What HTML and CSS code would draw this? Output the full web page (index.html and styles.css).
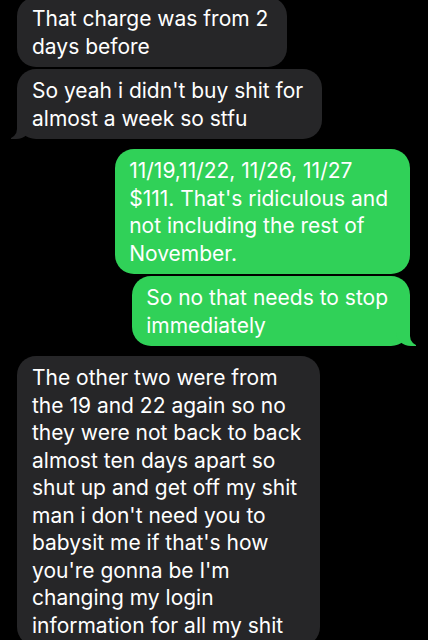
FILE: index.html
```html
<!DOCTYPE html>
<html lang="en">
<head>
<meta charset="utf-8">
<title>Messages</title>
<link rel="stylesheet" href="styles.css">
</head>
<body>
<main class="thread">
  <div class="msg them">That charge was from 2<br>days before</div>
  <div class="msg them tail">So yeah i didn't buy shit for<br>almost a week so stfu</div>
  <div class="msg me first-group">11/19,11/22, 11/26, 11/27<br>$111. That's ridiculous and<br>not including the rest of<br>November.</div>
  <div class="msg me tail">So no that needs to stop<br>immediately</div>
  <div class="msg them first-group">The other two were from<br>the 19 and 22 again so no<br>they were not back to back<br>almost ten days apart so<br>shut up and get off my shit<br>man i don't need you to<br>babysit me if that's how<br>you're gonna be I'm<br>changing my login<br>information for all my shit</div>
</main>
</body>
</html>
```

FILE: styles.css
```css
html, body {
  margin: 0;
  padding: 0;
  background: #000;
  overflow: hidden;
}

.thread {
  display: flex;
  flex-direction: column;
  gap: 2px;
  margin-top: -3px;
  padding: 0 18px 0 17px;
  font-family: Inter, "Noto Sans", sans-serif;
  font-size: 21px;
  line-height: 27.5px;
  color: #fff;
  letter-spacing: 0;
}

.msg {
  position: relative;
  width: fit-content;
  white-space: nowrap;
  border-radius: 19px;
  padding: 8px 19px 7px 15px;
}

.them {
  align-self: flex-start;
  background: #262628;
}

.me {
  align-self: flex-end;
  background: #30d158;
  padding: 8px 22px 7px 14px;
}

.first-group {
  margin-top: 8px;
}

.tail::before,
.tail::after {
  content: "";
  position: absolute;
  bottom: 0;
  height: 22px;
}

.them.tail::before {
  left: -6px;
  width: 20px;
  background: #262628;
  border-bottom-right-radius: 15px 14px;
}

.them.tail::after {
  left: -26px;
  width: 26px;
  background: #000;
  border-bottom-right-radius: 10px;
}

.me.tail::before {
  right: -6px;
  width: 20px;
  background: #30d158;
  border-bottom-left-radius: 15px 14px;
}

.me.tail::after {
  right: -26px;
  width: 26px;
  background: #000;
  border-bottom-left-radius: 10px;
}
```
